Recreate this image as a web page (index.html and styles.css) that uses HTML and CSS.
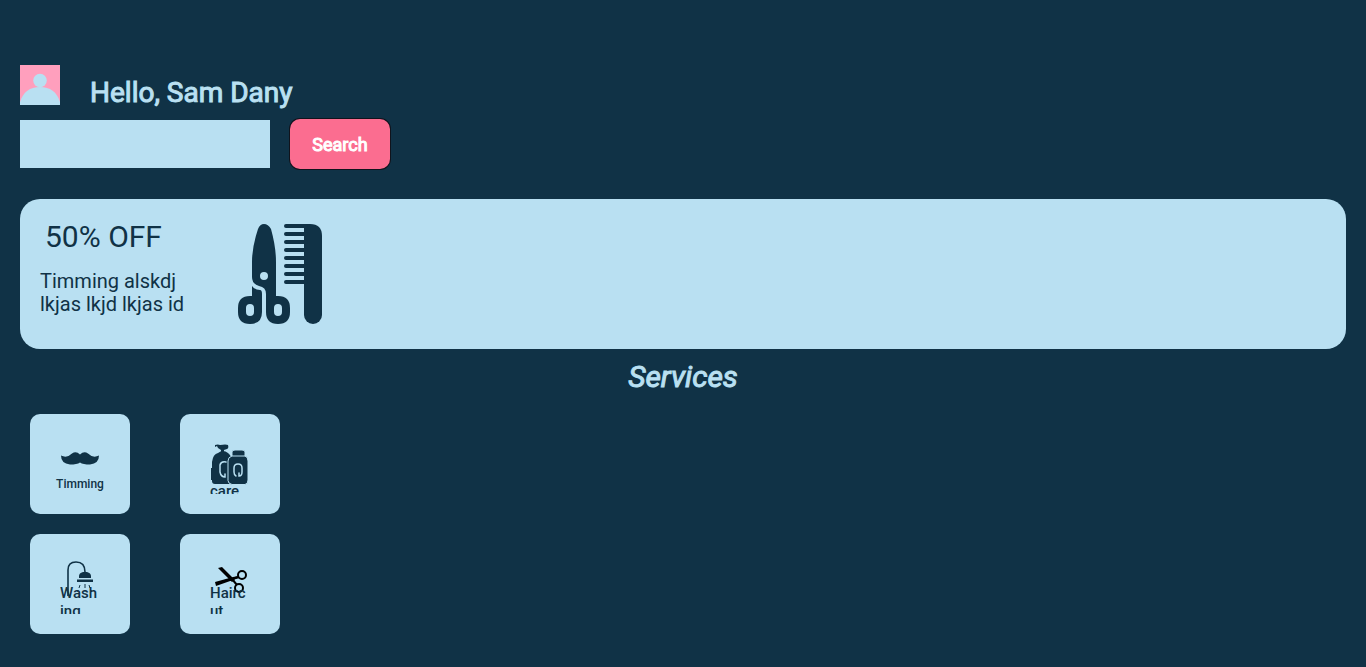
FILE: index.html
```html
<!DOCTYPE html>
<html lang="en">
<head>
<meta charset="utf-8">
<meta name="viewport" content="width=device-width, initial-scale=1">
<title>Services</title>
<link rel="stylesheet" href="styles.css">
</head>
<body>
<header class="greeting">
  <svg class="avatar" viewBox="0 0 40 40" aria-hidden="true"><path fill="#ff9fbd" d="M0 0h40v40H0z"/><circle cx="20" cy="15.500" r="6.800" fill="#b9e0f2"/><path fill="#b9e0f2" d="M0 40V37C3 27 10 22 20 22s17 5 20 15v3z"/></svg>
  <h1 class="hello">Hello, Sam Dany</h1>
</header>
<form class="search">
  <input class="search-box" type="text" aria-label="Search services">
  <button class="search-button" type="button">Search</button>
</form>
<section class="offer">
  <div class="offer-text">
    <h2 class="offer-title">50% OFF</h2>
    <p class="offer-copy">Timming alskdj lkjas lkjd lkjas id</p>
  </div>
  <svg class="offer-art" viewBox="0 0 84 100" aria-hidden="true">
    <path fill="#103246" d="M66 0h6q12 0 12 12v79a9 9 0 0 1-18 0z"/>
    <path stroke="#103246" stroke-width="4" stroke-linecap="round" d="M48 2h20M48 10h20M48 18h20M48 26h20M48 34h20M48 42h20M48 50h20M48 58h20"/>
    <path fill="#103246" fill-rule="evenodd" d="M20 5Q22 0 26 0T33 5Q38 23 38 38V72h2q12 0 12 12v4q0 12-12 12T28 88V70q0-7-7-8Q14 60 14 53V38Q14 23 20 5zM26 48a4 4 0 1 0 0 8 4 4 0 0 0 0-8zM40 80q-4 0-4 4v4q0 4 4 4t4-4v-4q0-4-4-4z"/>
    <path fill="#103246" fill-rule="evenodd" d="M14 62q3 4 8 4 2 0 2 4v18q0 12-12 12T0 88v-4q0-12 12-12h2zM12 80q-4 0-4 4v4q0 4 4 4t4-4v-4q0-4-4-4z"/>
  </svg>
</section>
<h2 class="services-title">Services</h2>
<main class="services">
  <a class="card" href="#timming">
    <span class="card-body card-body-center">
      <svg class="icon icon-wide" viewBox="0 0 40 40" aria-hidden="true"><path fill="#103246" d="M20 14.500q4-4 8-1 5 5 11 2 0 8-9 9-7 0-10-2-3 2-10 2-9-1-9-9 6 3 11-2 4-3 8 1z"/></svg>
      <span class="label-small">Timming</span>
    </span>
  </a>
  <a class="card" href="#care">
    <span class="card-body">
      <svg class="icon icon-care" viewBox="0 0 40 40" aria-hidden="true"><g fill="#103246"><path d="M5 1q3-1 5 0 6-1 8 0 1 3-1 4l-3 1v3H11V6L8 4 7 2 5 3z"/><path d="M2 37V18Q3 10 8 9q5-4 10 0 4 3 4 9v22H5q-3 0-3-3zM1 24h3v12H1z"/><path stroke="#b9e0f2" d="M22 40.500q-4-1-4-4V17q0-4 4-5V8q0-2 3-2h7q3 0 3 2v4q3 1 3 5v19q0 4-3 4.500z"/></g><g fill="none" stroke="#b9e0f2" stroke-width="1"><path d="M22 12h13"/><path stroke-linecap="round" stroke-width="1.500" d="M26 32q-2-1-2-4v-4q0-4 4-4t4 4v4q0 4-3 4v-3M16 18q-5-1-6 3v7q1 5 5 5v-3"/></g></svg>
      <span class="label">care</span>
    </span>
  </a>
  <a class="card" href="#washing">
    <span class="card-body">
      <svg class="icon icon-overlap" viewBox="0 0 40 40" aria-hidden="true"><path fill="none" stroke="#103246" stroke-width="1.600" d="M8 42V16q0-8 8-8 9 0 9 10"/><path fill="#103246" d="M19 24v-2q0-3 4-4h4q4 1 4 4v2zM17 25.500h16V28H17z"/><path fill="none" stroke="#103246" stroke-width="1" d="M20 31l-1 3M25 30v4M29 31l1 3M18 36l-1 2M25 36v2M31 36l1 2"/></svg>
      <span class="label">Wash<wbr>ing</span>
    </span>
  </a>
  <a class="card" href="#haircut">
    <span class="card-body">
      <svg class="icon icon-overlap" viewBox="0 0 40 40" aria-hidden="true"><path d="M8 14l4-1 13 13-3 2zM5 28l18-5 6-1v2l-6 2-17 6z"/><g fill="none" stroke="#000" stroke-width="2"><circle cx="32" cy="21" r="4"/><circle cx="29" cy="34" r="4"/><path d="M22 25l6-2M22 25l5 6"/></g></svg>
      <span class="label">Hairc<wbr>ut</span>
    </span>
  </a>
</main>
</body>
</html>
```
FILE: styles.css
```css
* { box-sizing: border-box; }
body {
  margin: 0;
  padding: 65px 20px 33px;
  background: #103246;
  color: #b9e0f2;
  font-family: Roboto, "Liberation Sans", sans-serif;
}
.greeting { display: flex; gap: 30px; height: 55px; }
.avatar { width: 40px; height: 40px; }
.hello {
  margin: 11px 0 0;
  font-size: 28px;
  line-height: 34px;
  font-weight: 400;
  -webkit-text-stroke: 1px currentColor;
}
.search { display: flex; align-items: center; gap: 20px; height: 48px; }
.search-box {
  width: 250px;
  height: 48px;
  padding: 0 10px;
  border: 0;
  border-radius: 0;
  background: #b9e0f2;
  color: #103246;
  font: inherit;
}
.search-button {
  width: 100px;
  height: 50px;
  padding: 2px 0 0;
  border: 0;
  border-radius: 10px;
  box-shadow: 0 0 0 1px #10131c;
  background: #fb6d90;
  color: #fff;
  font: 400 18px/22px Roboto, "Liberation Sans", sans-serif;
  -webkit-text-stroke: 1px currentColor;
}
.offer {
  display: flex;
  align-items: flex-start;
  gap: 48px;
  min-height: 150px;
  margin-top: 31px;
  padding: 20px;
  border-radius: 20px;
  background: #b9e0f2;
  color: #103246;
}
.offer-text { width: 150px; }
.offer-title { margin: 0 0 16px 5px; font-size: 30px; line-height: 35px; font-weight: 400; }
.offer-copy { margin: 0; font-size: 20px; line-height: 23px; }
.offer-art { width: 84px; height: 100px; margin-top: 5px; }
.services-title {
  margin: 10px 0 20px;
  text-align: center;
  font-size: 30px;
  line-height: 35px;
  font-weight: 400;
  font-style: italic;
  -webkit-text-stroke: 1px currentColor;
}
.services {
  display: grid;
  grid-template-columns: 100px 100px;
  gap: 20px 50px;
  padding: 0 10px;
}
.card {
  height: 100px;
  padding: 20px 0 20px 30px;
  border-radius: 10px;
  background: #b9e0f2;
  color: #103246;
  text-decoration: none;
}
.card-body { display: block; width: 40px; height: 60px; overflow: hidden; }
.card-body-center { overflow: visible; }
.icon { display: block; width: 40px; height: 40px; overflow: visible; }
.icon-wide { margin: 6px 0 -3px; }
.icon-care { margin: 10px 0 -2px; }
.icon-overlap { margin-bottom: -10px; }
.label { display: block; font-size: 15px; line-height: 18px; font-weight: 500; }
.label-small {
  display: block;
  margin: 0 -10px;
  text-align: center;
  font-size: 12px;
  line-height: 14px;
  font-weight: 500;
}
```
